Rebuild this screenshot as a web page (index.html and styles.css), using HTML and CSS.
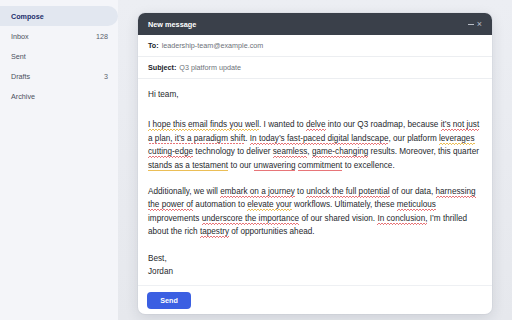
FILE: index.html
```html
<!DOCTYPE html>
<html>
<head>
<meta charset="utf-8">
<link rel="stylesheet" href="styles.css">
</head>
<body>
<div class="app">
  <nav class="sidebar">
    <div class="nav-item active">Compose</div>
    <div class="nav-item"><span>Inbox</span><span class="count">128</span></div>
    <div class="nav-item"><span>Sent</span></div>
    <div class="nav-item"><span>Drafts</span><span class="count">3</span></div>
    <div class="nav-item"><span>Archive</span></div>
  </nav>
  <main class="main">
    <section class="compose">
      <header class="compose-head">
        <span class="title">New message</span>
        <span class="controls"><span class="min"></span><span class="close">×</span></span>
      </header>
      <div class="field"><b>To:</b> <span class="val">leadership-team@example.com</span></div>
      <div class="field"><b>Subject:</b> <span class="val">Q3 platform update</span></div>
      <div class="body">
        <p>Hi team,</p>
        <p><span class="y">I hope this email finds you well</span>. I wanted to <span class="r">delve</span> into our Q3 roadmap, because <span class="r">it’s not just a plan, it’s a paradigm shift</span>. <span class="r">In today’s fast-paced digital landscape</span>, our platform <span class="y">leverages</span> <span class="r">cutting-edge</span> technology to deliver <span class="r">seamless</span>, <span class="r">game-changing</span> results. Moreover, this quarter <span class="y">stands as a testament</span> to our <span class="r">unwavering</span> <span class="r">commitment</span> to excellence.</p>
        <p>Additionally, we will <span class="r">embark on a journey</span> to <span class="r">unlock the full potential</span> of our data, <span class="r">harnessing the power of</span> automation to <span class="y">elevate your</span> workflows. Ultimately, these <span class="r">meticulous</span> improvements <span class="r">underscore the importance</span> of our shared vision. <span class="r">In conclusion,</span> I’m thrilled about the rich <span class="r">tapestry</span> of opportunities ahead.</p>
        <p>Best,<br>Jordan</p>
      </div>
      <footer class="compose-foot">
        <button class="send">Send</button>
      </footer>
    </section>
  </main>
</div>
</body>
</html>
```
FILE: styles.css
```css
* { box-sizing: border-box; }
html, body { margin: 0; padding: 0; }
body {
  font-family: "Liberation Sans", Arial, sans-serif;
  width: 512px;
  height: 320px;
  overflow: hidden;
  color: #1f2329;
}
.app {
  display: flex;
  height: 320px;
}
.sidebar {
  width: 118px;
  flex: none;
  background: #f4f5f9;
  padding-top: 6px;
  display: flex;
  flex-direction: column;
}
.nav-item {
  height: 20px;
  display: flex;
  align-items: center;
  justify-content: space-between;
  padding: 0 10px 0 11px;
  font-size: 7.2px;
  color: #4b5160;
}
.nav-item.active {
  background: #e2e7f0;
  border-radius: 0 10px 10px 0;
  color: #1c2f6b;
  font-weight: bold;
}
.count { color: #5a606c; }
.main {
  flex: 1;
  background: linear-gradient(180deg, #eceef3 0%, #e6e8ed 100%);
  padding: 13px 20px 6px 20px;
}
.compose {
  height: 301px;
  background: #fff;
  border-radius: 7px;
  box-shadow: 0 4px 14px rgba(30, 40, 60, 0.12), 0 0 0 1px rgba(30,40,60,0.03);
  display: flex;
  flex-direction: column;
  overflow: hidden;
}
.compose-head {
  height: 22px;
  flex: none;
  background: #3a404a;
  color: #fff;
  display: flex;
  align-items: center;
  justify-content: space-between;
  padding: 0 10px;
  font-size: 7.3px;
  font-weight: bold;
}
.controls {
  display: flex;
  align-items: center;
  gap: 3px;
  color: #b9bec7;
  font-weight: normal;
}
.min {
  display: block;
  width: 6px;
  height: 1px;
  background: #b9bec7;
}
.close { font-size: 9px; line-height: 1; }
.field {
  height: 22px;
  flex: none;
  display: flex;
  align-items: center;
  gap: 3px;
  padding: 0 10px;
  border-bottom: 1px solid #eceef1;
  font-size: 7.2px;
  color: #20242a;
}
.field b { font-weight: bold; }
.field .val { color: #6d7178; }
.body {
  flex: 1;
  min-height: 0;
  padding: 9px 10px 0 10px;
  font-size: 8.2px;
  line-height: 13.4px;
  color: #26292e;
}
.body p { margin: 0 0 13px 0; }
.body p:first-child { margin-bottom: 17px; }
.body p:last-child { margin-bottom: 0; }
.r, .y {
  padding-bottom: 1.5px;
  background-repeat: repeat-x;
  background-size: 3px 0.8px, 3px 0.8px;
  background-position: 0 100%, 0 calc(100% - 0.8px);
}
.r {
  background-image:
    linear-gradient(90deg, rgba(224, 71, 76, 0.75) 50%, transparent 50%),
    linear-gradient(90deg, transparent 50%, rgba(224, 71, 76, 0.75) 50%);
}
.y {
  background-image:
    linear-gradient(90deg, rgba(230, 174, 44, 0.8) 50%, transparent 50%),
    linear-gradient(90deg, transparent 50%, rgba(230, 174, 44, 0.8) 50%);
}
.compose-foot {
  height: 29px;
  flex: none;
  border-top: 1px solid #eef0f3;
  display: flex;
  align-items: center;
  padding: 0 9px;
}
.send {
  width: 44px;
  height: 17px;
  border: none;
  border-radius: 4px;
  background: #3b5fe2;
  color: #fff;
  font-family: "Liberation Sans", Arial, sans-serif;
  font-weight: bold;
  font-size: 7.2px;
  padding: 0;
}
```
